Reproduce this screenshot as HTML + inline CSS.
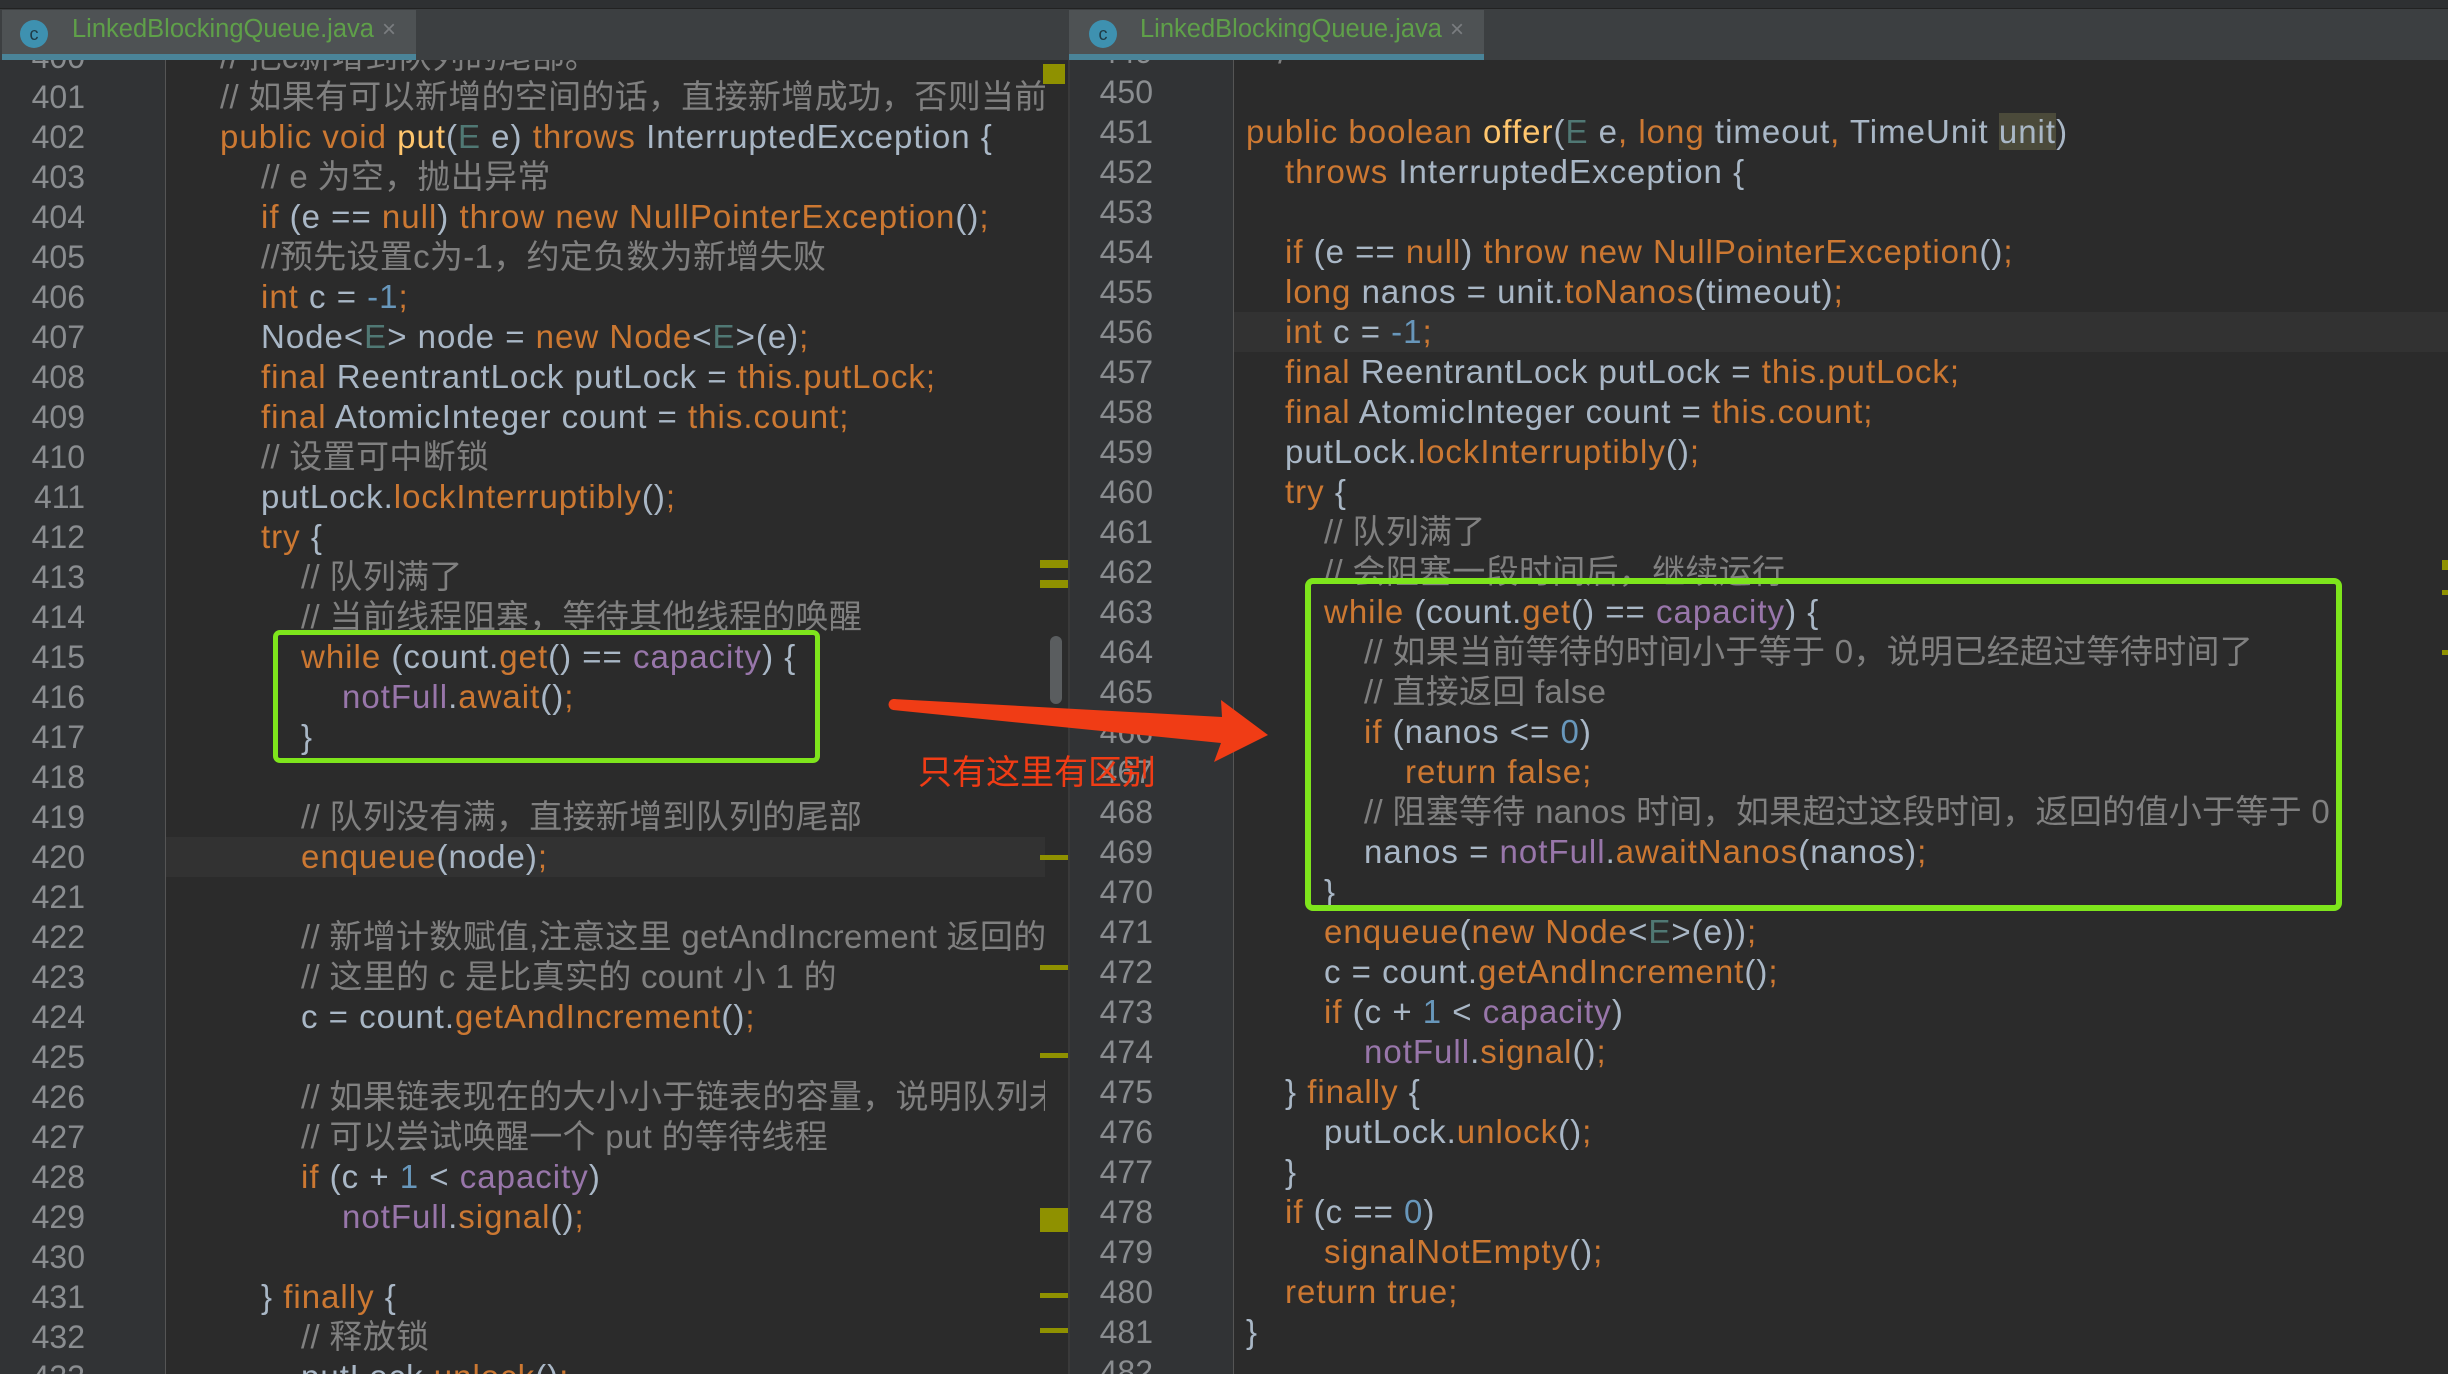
<!DOCTYPE html>
<html><head><meta charset="utf-8">
<style>
*{margin:0;padding:0;box-sizing:border-box}
body{width:2448px;height:1374px;background:#2b2b2b;position:relative;overflow:hidden;font-family:"Liberation Sans","Noto Sans CJK SC",sans-serif;color:#a9b7c6}
.abs{position:absolute}
.pane{position:absolute;top:60px;bottom:0;overflow:hidden;background:#2b2b2b}
.gut{position:absolute;top:0;bottom:0;left:0;background:#313335}
.ln{position:absolute;font-size:32px;color:#8a8d90;line-height:40px;text-align:right;width:60px}
.cl{position:absolute;font-size:33px;letter-spacing:1px;line-height:40px;white-space:pre}
.k{color:#cc7832}.m{color:#ffc66d}.c{color:#808080;letter-spacing:0.3px}.f{color:#9876aa}.n{color:#6897bb}.g{color:#507874}
.mk{position:absolute;background:#8f9100}
</style></head><body>
<div class="abs" style="left:0;top:0;width:2448px;height:9px;background:#2e3032;border-bottom:1px solid #222"></div>
<div class="abs" style="left:0;top:9px;width:2448px;height:51px;background:#3c3f41"></div>
<div class="abs" style="left:2px;top:10px;width:414px;height:50px;background:#4e5254;border-bottom:6px solid #4a8499"></div>
<div class="abs" style="left:20px;top:20px;width:28px;height:28px;border-radius:50%;background:#3e91b0;color:#1f3a45;font-size:18px;text-align:center;line-height:28px">c</div>
<div class="abs" style="left:72px;top:15px;font-size:25.5px;color:#5fa049">LinkedBlockingQueue.java</div>
<div class="abs" style="left:382px;top:16px;font-size:24px;color:#7a7d80">×</div>
<div class="abs" style="left:1069px;top:10px;width:415px;height:50px;background:#4e5254;border-bottom:6px solid #4a8499"></div>
<div class="abs" style="left:1089px;top:20px;width:28px;height:28px;border-radius:50%;background:#3e91b0;color:#1f3a45;font-size:18px;text-align:center;line-height:28px">c</div>
<div class="abs" style="left:1140px;top:15px;font-size:25.5px;color:#5fa049">LinkedBlockingQueue.java</div>
<div class="abs" style="left:1450px;top:16px;font-size:24px;color:#7a7d80">×</div>

<div class="pane" style="left:0;width:1068px">
 <div class="gut" style="width:166px;border-right:1px solid #555"></div>
 <div class="abs" style="left:166px;top:777px;width:880px;height:40px;background:#323232"></div>
 <div style="position:absolute;left:0;top:-23px">
  <div class="ln" style="left:25px;top:0">400<br>401<br>402<br>403<br>404<br>405<br>406<br>407<br>408<br>409<br>410<br>411<br>412<br>413<br>414<br>415<br>416<br>417<br>418<br>419<br>420<br>421<br>422<br>423<br>424<br>425<br>426<br>427<br>428<br>429<br>430<br>431<br>432<br>433</div>
  <div class="cl" style="left:220px;top:0"><span class="c">// 把c新增到队列的尾部。</span></div>
  <div class="cl" style="left:220px;top:40px"><span class="c">// 如果有可以新增的空间的话，直接新增成功，否则当前线程阻塞</span></div>
  <div class="cl" style="left:220px;top:80px"><span class="k">public void </span><span class="m">put</span>(<span class="g">E</span> e) <span class="k">throws </span>InterruptedException {</div>
  <div class="cl" style="left:261px;top:120px"><span class="c">// e 为空，抛出异常</span></div>
  <div class="cl" style="left:261px;top:160px"><span class="k">if </span>(e == <span class="k">null</span>) <span class="k">throw new </span><span class="k">NullPointerException</span>()<span class="k">;</span></div>
  <div class="cl" style="left:261px;top:200px"><span class="c">//预先设置c为-1，约定负数为新增失败</span></div>
  <div class="cl" style="left:261px;top:240px"><span class="k">int </span>c = <span class="n">-1</span><span class="k">;</span></div>
  <div class="cl" style="left:261px;top:280px">Node&lt;<span class="g">E</span>&gt; node = <span class="k">new Node</span>&lt;<span class="g">E</span>&gt;(e)<span class="k">;</span></div>
  <div class="cl" style="left:261px;top:320px"><span class="k">final </span>ReentrantLock putLock = <span class="k">this.putLock;</span></div>
  <div class="cl" style="left:261px;top:360px"><span class="k">final </span>AtomicInteger count = <span class="k">this.count;</span></div>
  <div class="cl" style="left:261px;top:400px"><span class="c">// 设置可中断锁</span></div>
  <div class="cl" style="left:261px;top:440px">putLock.<span class="k">lockInterruptibly</span>()<span class="k">;</span></div>
  <div class="cl" style="left:261px;top:480px"><span class="k">try </span>{</div>
  <div class="cl" style="left:301px;top:520px"><span class="c">// 队列满了</span></div>
  <div class="cl" style="left:301px;top:560px"><span class="c">// 当前线程阻塞，等待其他线程的唤醒</span></div>
  <div class="cl" style="left:301px;top:600px"><span class="k">while </span>(count.<span class="k">get</span>() == <span class="f">capacity</span>) {</div>
  <div class="cl" style="left:342px;top:640px"><span class="f">notFull</span>.<span class="k">await</span>()<span class="k">;</span></div>
  <div class="cl" style="left:301px;top:680px">}</div>
  <div class="cl" style="left:301px;top:760px"><span class="c">// 队列没有满，直接新增到队列的尾部</span></div>
  <div class="cl" style="left:301px;top:800px"><span class="k">enqueue</span>(node)<span class="k">;</span></div>
  <div class="cl" style="left:301px;top:880px"><span class="c">// 新增计数赋值,注意这里 getAndIncrement 返回的是旧值</span></div>
  <div class="cl" style="left:301px;top:920px"><span class="c">// 这里的 c 是比真实的 count 小 1 的</span></div>
  <div class="cl" style="left:301px;top:960px">c = count.<span class="k">getAndIncrement</span>()<span class="k">;</span></div>
  <div class="cl" style="left:301px;top:1040px"><span class="c">// 如果链表现在的大小小于链表的容量，说明队列未满</span></div>
  <div class="cl" style="left:301px;top:1080px"><span class="c">// 可以尝试唤醒一个 put 的等待线程</span></div>
  <div class="cl" style="left:301px;top:1120px"><span class="k">if </span>(c + <span class="n">1</span> &lt; <span class="f">capacity</span>)</div>
  <div class="cl" style="left:342px;top:1160px"><span class="f">notFull</span>.<span class="k">signal</span>()<span class="k">;</span></div>
  <div class="cl" style="left:261px;top:1240px">} <span class="k">finally </span>{</div>
  <div class="cl" style="left:301px;top:1280px"><span class="c">// 释放锁</span></div>
  <div class="cl" style="left:301px;top:1320px">putLock.<span class="k">unlock</span>()<span class="k">;</span></div>
 </div>
 <div class="abs" style="left:1045px;top:0;width:23px;height:1314px;background:#2b2b2b"></div>
 <div class="mk" style="left:1043px;top:4px;width:22px;height:20px"></div>
 <div class="mk" style="left:1040px;top:500px;width:28px;height:8px"></div>
 <div class="mk" style="left:1040px;top:520px;width:28px;height:8px"></div>
 <div class="mk" style="left:1040px;top:795px;width:28px;height:5px"></div>
 <div class="mk" style="left:1040px;top:905px;width:28px;height:5px"></div>
 <div class="mk" style="left:1040px;top:993px;width:28px;height:5px"></div>
 <div class="mk" style="left:1040px;top:1148px;width:28px;height:24px"></div>
 <div class="mk" style="left:1040px;top:1233px;width:28px;height:5px"></div>
 <div class="mk" style="left:1040px;top:1268px;width:28px;height:5px"></div>
 <div class="abs" style="left:1050px;top:576px;width:12px;height:68px;border-radius:6px;background:#5a5d5f"></div>
</div>
<div class="abs" style="left:1068px;top:60px;width:2px;height:1314px;background:#3a3a3a"></div>

<div class="pane" style="left:1070px;width:1378px">
 <div class="gut" style="width:164px;border-right:1px solid #555"></div>
 <div class="abs" style="left:164px;top:252px;width:1220px;height:40px;background:#323232"></div>
 <div style="position:absolute;left:-1070px;top:-28px">
  <div class="ln" style="left:1093px;top:0">449<br>450<br>451<br>452<br>453<br>454<br>455<br>456<br>457<br>458<br>459<br>460<br>461<br>462<br>463<br>464<br>465<br>466<br>467<br>468<br>469<br>470<br>471<br>472<br>473<br>474<br>475<br>476<br>477<br>478<br>479<br>480<br>481<br>482</div>
  <div class="cl" style="left:1246px;top:0"><span class="c">  */</span></div>
  <div class="cl" style="left:1246px;top:80px"><span class="k">public boolean </span><span class="m">offer</span>(<span class="g">E</span> e<span class="k">, long </span>timeout<span class="k">, </span>TimeUnit <span style="background:#4b4a3a">unit</span>)</div>
  <div class="cl" style="left:1285px;top:120px"><span class="k">throws </span>InterruptedException {</div>
  <div class="cl" style="left:1285px;top:200px"><span class="k">if </span>(e == <span class="k">null</span>) <span class="k">throw new NullPointerException</span>()<span class="k">;</span></div>
  <div class="cl" style="left:1285px;top:240px"><span class="k">long </span>nanos = unit.<span class="k">toNanos</span>(timeout)<span class="k">;</span></div>
  <div class="cl" style="left:1285px;top:280px"><span class="k">int </span>c = <span class="n">-1</span><span class="k">;</span></div>
  <div class="cl" style="left:1285px;top:320px"><span class="k">final </span>ReentrantLock putLock = <span class="k">this.putLock;</span></div>
  <div class="cl" style="left:1285px;top:360px"><span class="k">final </span>AtomicInteger count = <span class="k">this.count;</span></div>
  <div class="cl" style="left:1285px;top:400px">putLock.<span class="k">lockInterruptibly</span>()<span class="k">;</span></div>
  <div class="cl" style="left:1285px;top:440px"><span class="k">try </span>{</div>
  <div class="cl" style="left:1324px;top:480px"><span class="c">// 队列满了</span></div>
  <div class="cl" style="left:1324px;top:520px"><span class="c">// 会阻塞一段时间后，继续运行</span></div>
  <div class="cl" style="left:1324px;top:560px"><span class="k">while </span>(count.<span class="k">get</span>() == <span class="f">capacity</span>) {</div>
  <div class="cl" style="left:1364px;top:600px"><span class="c">// 如果当前等待的时间小于等于 0，说明已经超过等待时间了</span></div>
  <div class="cl" style="left:1364px;top:640px"><span class="c">// 直接返回 false</span></div>
  <div class="cl" style="left:1364px;top:680px"><span class="k">if </span>(nanos &lt;= <span class="n">0</span>)</div>
  <div class="cl" style="left:1405px;top:720px"><span class="k">return false;</span></div>
  <div class="cl" style="left:1364px;top:760px"><span class="c">// 阻塞等待 nanos 时间，如果超过这段时间，返回的值小于等于 0</span></div>
  <div class="cl" style="left:1364px;top:800px">nanos = <span class="f">notFull</span>.<span class="k">awaitNanos</span>(nanos)<span class="k">;</span></div>
  <div class="cl" style="left:1324px;top:840px">}</div>
  <div class="cl" style="left:1324px;top:880px"><span class="k">enqueue</span>(<span class="k">new Node</span>&lt;<span class="g">E</span>&gt;(e))<span class="k">;</span></div>
  <div class="cl" style="left:1324px;top:920px">c = count.<span class="k">getAndIncrement</span>()<span class="k">;</span></div>
  <div class="cl" style="left:1324px;top:960px"><span class="k">if </span>(c + <span class="n">1</span> &lt; <span class="f">capacity</span>)</div>
  <div class="cl" style="left:1364px;top:1000px"><span class="f">notFull</span>.<span class="k">signal</span>()<span class="k">;</span></div>
  <div class="cl" style="left:1285px;top:1040px">} <span class="k">finally </span>{</div>
  <div class="cl" style="left:1324px;top:1080px">putLock.<span class="k">unlock</span>()<span class="k">;</span></div>
  <div class="cl" style="left:1285px;top:1120px">}</div>
  <div class="cl" style="left:1285px;top:1160px"><span class="k">if </span>(c == <span class="n">0</span>)</div>
  <div class="cl" style="left:1324px;top:1200px"><span class="k">signalNotEmpty</span>()<span class="k">;</span></div>
  <div class="cl" style="left:1285px;top:1240px"><span class="k">return true;</span></div>
  <div class="cl" style="left:1246px;top:1280px">}</div>
 </div>
 <div class="mk" style="left:1372px;top:500px;width:6px;height:10px"></div>
 <div class="mk" style="left:1372px;top:530px;width:6px;height:5px"></div>
 <div class="mk" style="left:1372px;top:590px;width:6px;height:5px"></div>
</div>

<div class="abs" style="left:273px;top:630px;width:547px;height:133px;border:5px solid #7ee51c;border-radius:7px"></div>
<div class="abs" style="left:1305px;top:578px;width:1037px;height:333px;border:6px solid #7ee51c;border-radius:8px"></div>

<svg class="abs" style="left:0;top:0" width="2448" height="1374">
 <polygon points="893,699 1222,717 1221,700 1268,735 1214,762 1221,743 893,710" fill="#f03c15"/>
 <circle cx="894" cy="704.5" r="5.5" fill="#f03c15"/>
</svg>
<div class="abs" style="left:918px;top:748px;font-size:34px;color:#f03c15;font-family:'Noto Sans CJK SC',sans-serif;line-height:44px">只有这里有区别</div>
</body></html>
